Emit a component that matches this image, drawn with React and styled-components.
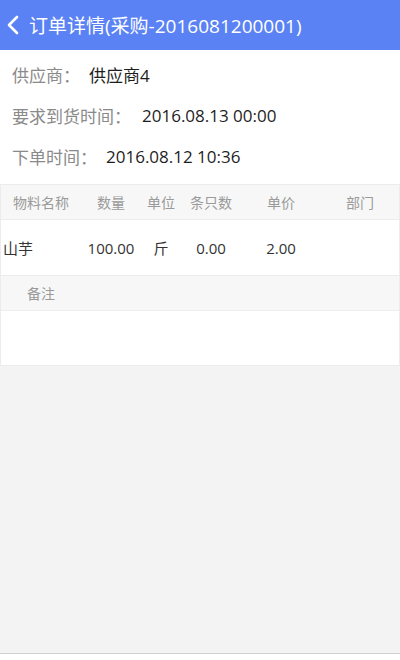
import React from "react";
import styled, { createGlobalStyle } from "styled-components";

const Global = createGlobalStyle`
  html, body { margin: 0; padding: 0; background: #f3f3f3; }
  body { font-family: "Open Sans", "Noto Sans CJK SC", sans-serif; }
  * { box-sizing: border-box; }
`;

const Page = styled.div`
  width: 400px;
  height: 660px;
  display: flex;
  flex-direction: column;
  background: #f3f3f3;
  overflow: hidden;
`;

const Header = styled.div`
  height: 50px;
  flex: none;
  background: #5b82f4;
  display: flex;
  align-items: center;
  padding-left: 6px;
  color: #fff;
`;

const Title = styled.div`
  font-size: 19px;
  margin-left: 9px;
  color: #fff;
`;

const Info = styled.div`
  background: #fff;
  padding: 4px 0 7px;
  display: flex;
  flex-direction: column;
`;

const InfoRow = styled.div`
  height: 41px;
  display: flex;
  align-items: center;
  padding-left: 12px;
  font-size: 17px;
`;

const Label = styled.span`
  color: #8a8a8a;
`;

const Value = styled.span`
  color: #1e1e1e;
  margin-left: ${(p) => p.$gap || 9}px;
`;

const Table = styled.div`
  border: 1px solid #ececec;
  background: #fff;
`;

const Row = styled.div`
  display: grid;
  grid-template-columns: 80px 60px 40px 60px 80px 1fr;
  height: ${(p) => p.$h}px;
  align-items: center;
  background: ${(p) => (p.$head ? "#f7f7f7" : "#fff")};
  border-bottom: 1px solid #ececec;
`;

const Cell = styled.div`
  text-align: ${(p) => (p.$left ? "left" : "center")};
  padding-left: ${(p) => (p.$left ? "2px" : "0")};
  font-size: ${(p) => (p.$head ? "14px" : "15px")};
  color: ${(p) => (p.$head ? "#9a9a9a" : "#333")};
  white-space: nowrap;
`;

const Blank = styled.div`
  height: ${(p) => p.$h}px;
  background: #fff;
`;

const Filler = styled.div`
  flex: 1;
  background: #f3f3f3;
`;

const Bottom = styled.div`
  height: 7px;
  flex: none;
  background: #fff;
  border-top: 1px solid #cfcfcf;
`;

const Back = () => (
  <svg width="14" height="20" viewBox="0 0 14 20">
    <path d="M11 2 L3 10 L11 18" fill="none" stroke="#fff" strokeWidth="2.6" strokeLinecap="round" strokeLinejoin="round" />
  </svg>
);

export default function App() {
  return (
    <Page>
      <Global />
      <Header>
        <Back />
        <Title>订单详情(采购-2016081200001)</Title>
      </Header>
      <Info>
        <InfoRow>
          <Label>供应商：</Label>
          <Value>供应商4</Value>
        </InfoRow>
        <InfoRow>
          <Label>要求到货时间：</Label>
          <Value $gap={11}>2016.08.13 00:00</Value>
        </InfoRow>
        <InfoRow>
          <Label>下单时间：</Label>
          <Value>2016.08.12 10:36</Value>
        </InfoRow>
      </Info>
      <Table>
        <Row $head $h={35}>
          <Cell $head>物料名称</Cell>
          <Cell $head>数量</Cell>
          <Cell $head>单位</Cell>
          <Cell $head>条只数</Cell>
          <Cell $head>单价</Cell>
          <Cell $head>部门</Cell>
        </Row>
        <Row $h={56}>
          <Cell $left>山芋</Cell>
          <Cell>100.00</Cell>
          <Cell>斤</Cell>
          <Cell>0.00</Cell>
          <Cell>2.00</Cell>
          <Cell></Cell>
        </Row>
        <Row $head $h={35}>
          <Cell $head>备注</Cell>
        </Row>
        <Blank $h={54} />
      </Table>
      <Filler />
      <Bottom />
    </Page>
  );
}
